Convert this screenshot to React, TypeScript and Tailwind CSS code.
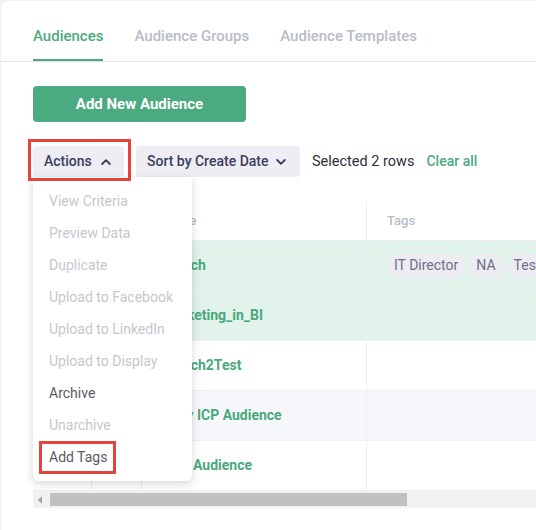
import React from 'react';

interface Row {
    name: string;
    tags: string[];
    selected: boolean;
}

const rows: Row[] = [
    { name: 'Search', tags: ['IT Director', 'NA', 'Test'], selected: true },
    { name: 'Marketing_in_BI', tags: [], selected: true },
    { name: 'Search2Test', tags: [], selected: false },
    { name: 'Navy ICP Audience', tags: [], selected: false },
    { name: 'Test Audience', tags: [], selected: false },
];

const menuItems = [
    { label: 'View Criteria', enabled: false },
    { label: 'Preview Data', enabled: false },
    { label: 'Duplicate', enabled: false },
    { label: 'Upload to Facebook', enabled: false },
    { label: 'Upload to LinkedIn', enabled: false },
    { label: 'Upload to Display', enabled: false },
    { label: 'Archive', enabled: true },
    { label: 'Unarchive', enabled: false },
    { label: 'Add Tags', enabled: true },
];

const Chevron = ({ up }: { up?: boolean }) => (
    <svg width="10" height="6" viewBox="0 0 10 6" fill="none">
        <path
            d={up ? 'M1.2 5L5 1.2 8.8 5' : 'M1.2 1L5 4.8 8.8 1'}
            stroke="currentColor"
            strokeWidth="1.9"
            strokeLinecap="round"
            strokeLinejoin="round"
        />
    </svg>
);

const Checkbox = ({ checked }: { checked: boolean }) => (
    <span
        className={
            checked
                ? 'w-4 h-4 rounded-[3px] bg-[#4caa80] flex items-center justify-center'
                : 'w-4 h-4 rounded-[3px] border border-[#c9ccd6] bg-white'
        }
    >
        {checked && (
            <svg width="10" height="8" viewBox="0 0 10 8" fill="none">
                <path d="M1 4l3 3 5-6" stroke="white" strokeWidth="1.8" />
            </svg>
        )}
    </span>
);

const ActionsMenu = () => (
    <div className="absolute left-0 top-full z-10 w-[159px] bg-white rounded-b-md shadow-[0_3px_10px_rgba(0,0,0,0.16)] py-2">
        {menuItems.map((item) => (
            <div
                key={item.label}
                className={
                    'relative h-8 flex items-center pl-4 text-[14px] ' +
                    (item.enabled ? 'text-[#595b63]' : 'text-[#c6c7cc]')
                }
            >
                {item.label}
                {item.label === 'Add Tags' && (
                    <span className="absolute left-[6px] top-0 w-[77px] h-[33px] border-[3px] border-[#e5443c] pointer-events-none" />
                )}
            </div>
        ))}
    </div>
);

const AudienceTable = () => (
    <div className="mt-6 overflow-hidden">
        <div className="w-[900px]">
            <div className="flex h-10 bg-white border-b border-[#eef0f3] text-[13px] font-medium text-[#b9bdc9]">
                <div className="w-[59px] border-r border-[#eceef2] flex items-center justify-center">
                    <Checkbox checked={false} />
                </div>
                <div className="w-[50px] border-r border-[#eceef2]" />
                <div className="w-[225px] border-r border-[#eceef2] flex items-center pl-5">Name</div>
                <div className="flex-1 flex items-center pl-5">Tags</div>
            </div>
            {rows.map((row, i) => (
                <div
                    key={row.name}
                    className={
                        'flex h-[50px] border-b border-[#eef0f3] ' +
                        (row.selected ? 'bg-[#e1f3ea]' : i % 2 === 1 ? 'bg-[#f6f7fb]' : 'bg-white')
                    }
                >
                    <div className="w-[59px] border-r border-[#eceef2] flex items-center justify-center">
                        <Checkbox checked={row.selected} />
                    </div>
                    <div className="w-[50px] border-r border-[#eceef2]" />
                    <div className="w-[225px] border-r border-[#eceef2] flex items-center pl-5 text-[14px] font-bold text-[#4aa87c]">
                        {row.name}
                    </div>
                    <div className="flex-1 flex items-center gap-1 pl-5">
                        {row.tags.map((tag) => (
                            <span
                                key={tag}
                                className="h-6 px-[7px] rounded-full bg-[#ececf2] text-[14px] text-[#6b7089] flex items-center"
                            >
                                {tag}
                            </span>
                        ))}
                    </div>
                </div>
            ))}
        </div>
        <div className="h-[17px] bg-[#f1f1f1] flex items-center">
            <span className="ml-[5px] w-0 h-0 border-y-[4px] border-y-transparent border-r-[4px] border-r-[#a3a3a3]" />
            <span className="ml-[8px] w-[357px] h-[13px] bg-[#c1c1c1]" />
        </div>
    </div>
);

const App = () => {
    return (
        <div className="min-h-screen bg-[#eef0f4] pl-px pt-px font-['Roboto',sans-serif]">
            <div className="min-h-[529px] bg-white rounded-tl-lg overflow-hidden">
                <div className="flex gap-[31px] pl-8 pt-[25px] border-b border-[#e3e4ea] text-[15px] leading-5 font-medium">
                    <div className="pb-[13px] border-b-2 border-[#4caa80] text-[#4caa80]">Audiences</div>
                    <div className="pb-[13px] border-b-2 border-transparent text-[#b8bcc8]">Audience Groups</div>
                    <div className="pb-[13px] border-b-2 border-transparent text-[#b8bcc8]">Audience Templates</div>
                </div>

                <div className="pl-8">
                    <button className="mt-6 w-[213px] h-9 rounded bg-[#4caa80] text-white text-[15px] font-bold">
                        Add New Audience
                    </button>

                    <div className="mt-6 flex items-center h-[31px]">
                        <div className="relative h-full">
                            <button className="h-full w-[91px] pl-[11px] pr-[13px] rounded bg-[#ededf3] text-[#3a4060] text-[14px] font-medium flex items-center justify-between">
                                Actions
                                <Chevron up />
                            </button>
                            <span className="absolute -left-[5px] -top-[7px] -right-[7px] -bottom-[4px] z-20 border-[3px] border-[#e5443c] pointer-events-none" />
                            <ActionsMenu />
                        </div>
                        <button className="ml-3 h-full w-[164px] pl-[11px] pr-[14px] rounded bg-[#ededf3] text-[#3a4060] text-[14px] font-medium flex items-center justify-between">
                            Sort by Create Date
                            <Chevron />
                        </button>
                        <span className="ml-3 text-[14.5px] text-[#2e3038]">Selected 2 rows</span>
                        <span className="ml-3 text-[14px] font-medium text-[#4caa80]">Clear all</span>
                    </div>

                    <AudienceTable />
                </div>
            </div>
        </div>
    );
};

export default App;
